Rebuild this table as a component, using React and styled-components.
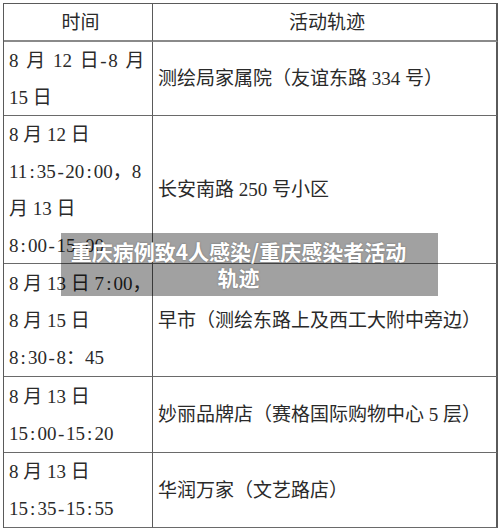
import React from "react";
import styled, { createGlobalStyle } from "styled-components";

const Global = createGlobalStyle`
  html, body { margin: 0; padding: 0; background: #ffffff; }
  body { width: 500px; height: 529px; overflow: hidden; }
`;

const Page = styled.div`
  position: relative;
  width: 500px;
  height: 529px;
  padding: 3px 2px 0 3px;
  box-sizing: border-box;
  background: #fff;
`;

const Table = styled.div`
  display: grid;
  grid-template-columns: 149px 1fr;
  grid-template-rows: 38px 74px 148px 113px 76px 75px;
  border-top: 1px solid #5a5a5a;
  border-left: 1px solid #5a5a5a;
  font-family: "Liberation Serif", "Noto Sans CJK SC", serif;
  font-size: 19px;
  color: #2a2a2a;
`;

const Cell = styled.div`
  display: flex;
  flex-direction: column;
  justify-content: center;
  align-items: ${(p) => (p.$head ? "center" : "flex-start")};
  padding: 0 0 0 5px;
  box-sizing: border-box;
  border-right: ${(p) => (p.$last ? "2px solid #5a5a5a" : "1px solid #5a5a5a")};
  border-bottom: ${(p) => (p.$head ? "2px solid #8a8a8a" : "1px solid #6a6a6a")};
  line-height: 37px;
  white-space: nowrap;
  overflow: hidden;
`;

const Line = styled.span`
  display: block;
  word-spacing: ${(p) => (p.$spread ? `${p.$spread}px` : "normal")};
`;

/* half-width cell, as ASCII punctuation sits in a Song-style CJK font */
const Half = styled.span`
  display: inline-block;
  width: 0.5em;
  text-align: center;
`;

const Banner = styled.div`
  position: absolute;
  left: 61px;
  top: 233px;
  width: 377px;
  height: 63px;
  box-sizing: border-box;
  padding: 5px 30px 5px 8px;
  background: rgba(0, 0, 0, 0.37);
  color: #ffffff;
  font-family: "Noto Sans CJK SC", "Noto Sans", sans-serif;
  font-weight: 700;
  font-size: 21px;
  line-height: 26px;
  text-align: center;
  text-shadow: 0 0 2px rgba(0, 0, 0, 0.35);
  white-space: nowrap;
`;

function Song({ text, spread }) {
  const parts = [];
  let buf = "";
  for (const ch of text) {
    if (ch === ":" || ch === "-") {
      if (buf) parts.push(buf);
      buf = "";
      parts.push(<Half key={parts.length}>{ch}</Half>);
    } else {
      buf += ch;
    }
  }
  if (buf) parts.push(buf);
  return <Line $spread={spread}>{parts}</Line>;
}

const rows = [
  { time: [["8 月 12 日-8 月", 3], ["15 日"]], place: "测绘局家属院（友谊东路 334 号）" },
  {
    time: [["8 月 12 日"], ["11:35-20:00，8"], ["月 13 日"], ["8:00-15:00"]],
    place: "长安南路 250 号小区",
  },
  { time: [["8 月 13 日 7:00，"], ["8 月 15 日"], ["8:30-8：45"]], place: "早市（测绘东路上及西工大附中旁边）" },
  { time: [["8 月 13 日"], ["15:00-15:20"]], place: "妙丽品牌店（赛格国际购物中心 5 层）" },
  { time: [["8 月 13 日"], ["15:35-15:55"]], place: "华润万家（文艺路店）" },
];

export default function App() {
  return (
    <>
      <Global />
      <Page>
        <Table>
          <Cell $head>时间</Cell>
          <Cell $head $last>活动轨迹</Cell>
          {rows.map((r, i) => (
            <React.Fragment key={i}>
              <Cell>
                {r.time.map(([t, s], k) => (
                  <Song key={k} text={t} spread={s} />
                ))}
              </Cell>
              <Cell $last>
                <Song text={r.place} />
              </Cell>
            </React.Fragment>
          ))}
        </Table>
        <Banner>
          <Line>重庆病例致4人感染/重庆感染者活动</Line>
          <Line>轨迹</Line>
        </Banner>
      </Page>
    </>
  );
}
